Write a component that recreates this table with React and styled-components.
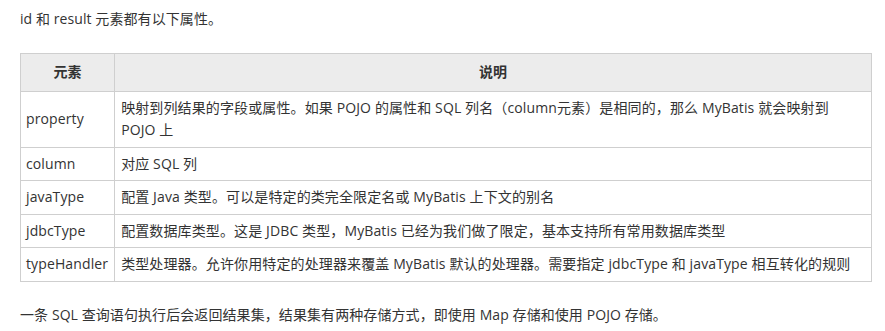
import React from "react";
import styled, { createGlobalStyle } from "styled-components";

const Global = createGlobalStyle`
  html, body { margin: 0; padding: 0; background: #fff; }
  body {
    font-family: "Open Sans", "Noto Sans CJK SC", sans-serif;
    font-size: 14px;
    color: #333;
  }
`;

const Page = styled.div`
  padding: 8px 14px 0 20px;
`;

const Para = styled.p`
  margin: 0;
  line-height: 22px;
  font-size: 14px;
  letter-spacing: 0.08px;
`;

const Table = styled.table`
  border-collapse: collapse;
  width: 852px;
  margin: 23px 0 22px;
  font-size: 14px;
  line-height: 22.5px;
  letter-spacing: 0.12px;
`;

const Th = styled.th`
  background: #ececec;
  border: 1px solid #cfcfcf;
  padding: 7px 6px;
  font-weight: bold;
  text-align: center;
  width: ${(p) => p.$w || "auto"};
`;

const Td = styled.td`
  border: 1px solid #cfcfcf;
  padding: 5px 6px 5px ${(p) => (p.$first ? "5px" : "6px")};
  vertical-align: middle;
  text-align: left;
`;

const rows = [
  [
    "property",
    "映射到列结果的字段或属性。如果 POJO 的属性和 SQL 列名（column元素）是相同的，那么 MyBatis 就会映射到 POJO 上",
  ],
  ["column", "对应 SQL 列"],
  ["javaType", "配置 Java 类型。可以是特定的类完全限定名或 MyBatis 上下文的别名"],
  ["jdbcType", "配置数据库类型。这是 JDBC 类型，MyBatis 已经为我们做了限定，基本支持所有常用数据库类型"],
  ["typeHandler", "类型处理器。允许你用特定的处理器来覆盖 MyBatis 默认的处理器。需要指定 jdbcType 和 javaType 相互转化的规则"],
];

export default function App() {
  return (
    <>
      <Global />
      <Page>
        <Para>id 和 result 元素都有以下属性。</Para>
        <Table>
          <thead>
            <tr>
              <Th $w="80px">元素</Th>
              <Th>说明</Th>
            </tr>
          </thead>
          <tbody>
            {rows.map(([k, v]) => (
              <tr key={k}>
                <Td $first>{k}</Td>
                <Td>{v}</Td>
              </tr>
            ))}
          </tbody>
        </Table>
        <Para>一条 SQL 查询语句执行后会返回结果集，结果集有两种存储方式，即使用 Map 存储和使用 POJO 存储。</Para>
      </Page>
    </>
  );
}
